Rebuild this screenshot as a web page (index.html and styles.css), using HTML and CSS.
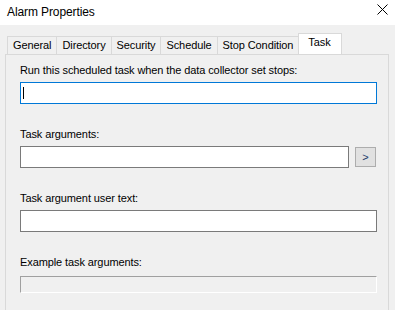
FILE: index.html
```html
<!DOCTYPE html>
<html>
<head>
    <meta charset="UTF-8">
    <title>Alarm Properties</title>
    <link rel="stylesheet" href="styles.css">
</head>
<body>
    <div class="titlebar">
        <span class="title">Alarm Properties</span>
        <svg class="close" width="11" height="11" viewBox="0 0 11 11">
            <path d="M0.5 0.5 L10.5 10.5 M10.5 0.5 L0.5 10.5" stroke="#000" stroke-width="1" fill="none"/>
        </svg>
    </div>

    <div class="tabs">
        <div class="tab">General</div>
        <div class="tab">Directory</div>
        <div class="tab">Security</div>
        <div class="tab">Schedule</div>
        <div class="tab">Stop Condition</div>
        <div class="tab selected">Task</div>
    </div>

    <div class="panel">
        <div class="group">
            <div class="label">Run this scheduled task when the data collector set stops:</div>
            <div class="edit focused"><span class="caret"></span></div>
        </div>

        <div class="group">
            <div class="label">Task arguments:</div>
            <div class="row">
                <div class="edit"></div>
                <div class="btn">&gt;</div>
            </div>
        </div>

        <div class="group">
            <div class="label">Task argument user text:</div>
            <div class="edit"></div>
        </div>

        <div class="group">
            <div class="label">Example task arguments:</div>
            <div class="readonly"></div>
        </div>
    </div>
</body>
</html>
```

FILE: styles.css
```css
body {
    margin: 0;
    width: 395px;
    height: 310px;
    overflow: hidden;
    background: #f0f0f0;
    font-family: 'Liberation Sans', Arial, sans-serif;
    font-size: 11px;
    letter-spacing: -0.1px;
    line-height: 15px;
    color: #000;
}
.titlebar {
    height: 25px;
    background: #fff;
    display: flex;
    align-items: center;
    padding-left: 7px;
    position: relative;
    font-size: 12px;
}
.close {
    position: absolute;
    left: 377px;
    top: 4px;
}
.tabs {
    display: flex;
    align-items: flex-end;
    height: 21px;
    margin-top: 8px;
    padding-left: 7px;
    position: relative;
    z-index: 1;
}
.tab {
    height: 18px;
    box-sizing: border-box;
    border: 1px solid #d9d9d9;
    border-bottom: none;
    margin-left: -1px;
    padding: 1px 5px 0;
    background: #f0f0f0;
}
.tab:first-child {
    margin-left: 0;
}
.tab.selected {
    height: 21px;
    padding: 1px 10px 0 9px;
    background: #fff;
}
.panel {
    margin-left: 5px;
    width: 384px;
    height: 256px;
    border: 1px solid #d9d9d9;
    border-bottom: none;
    padding: 8px 11px 0 14px;
    box-sizing: border-box;
}
.group {
    margin-bottom: 23px;
}
.label {
    margin-bottom: 4px;
}
.edit {
    height: 22px;
    box-sizing: border-box;
    border: 1px solid #7a7a7a;
    background: #fff;
    flex: 1;
    position: relative;
}
.edit.focused {
    border-color: #0078d7;
}
.caret {
    position: absolute;
    left: 2px;
    top: 4px;
    width: 1px;
    height: 12px;
    background: #000;
}
.row {
    display: flex;
    align-items: center;
    gap: 6px;
}
.btn {
    width: 21px;
    height: 20px;
    margin-right: 1px;
    box-sizing: border-box;
    border: 1px solid #adadad;
    background: #e1e1e1;
    display: flex;
    align-items: center;
    justify-content: center;
    font-size: 11px;
    color: #1a3a6a;
}
.readonly {
    height: 17px;
    box-sizing: border-box;
    border-top: 1px solid #a0a0a0;
    border-left: 1px solid #a0a0a0;
    border-right: 1px solid #fff;
    border-bottom: 1px solid #fff;
    background: #f0f0f0;
    margin-top: 6px;
}
```
